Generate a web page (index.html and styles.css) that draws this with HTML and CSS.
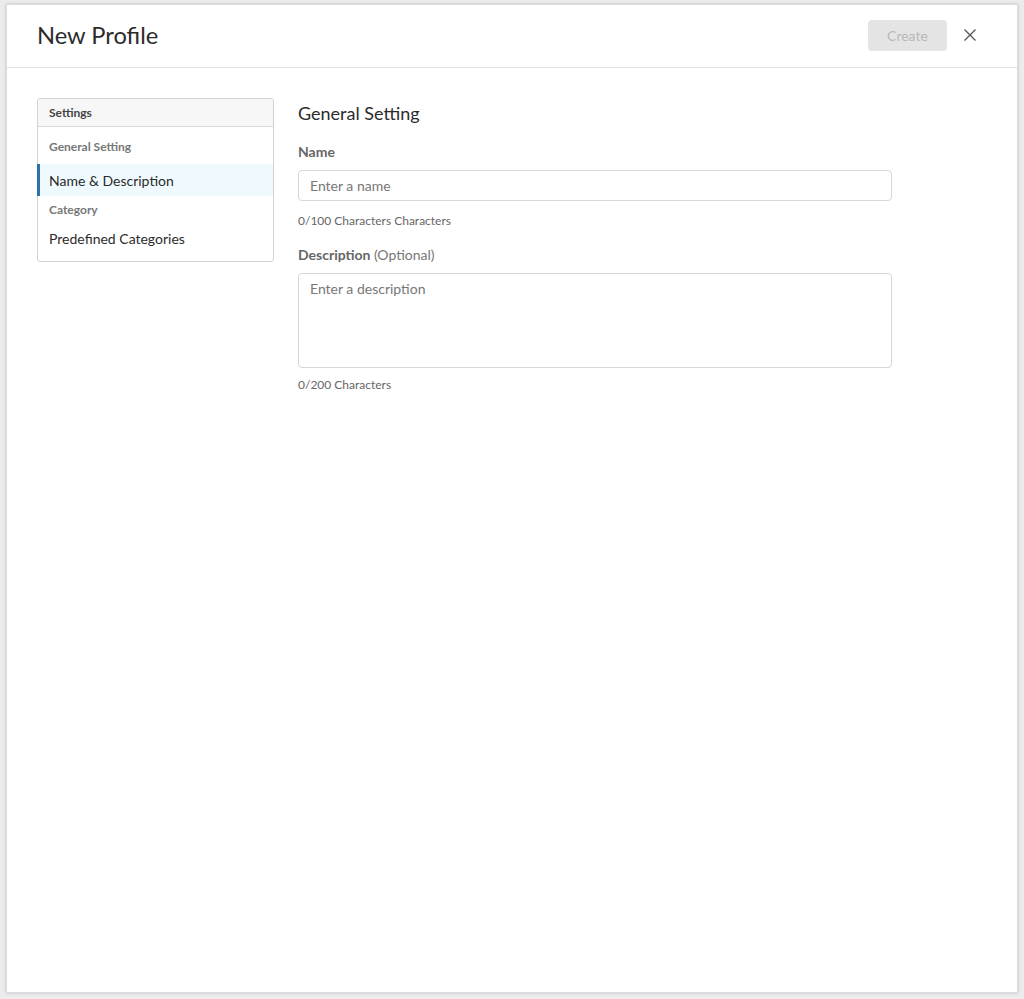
FILE: index.html
```html
<!DOCTYPE html>
<html lang="en">
<head>
<meta charset="utf-8">
<title>New Profile</title>
<link rel="stylesheet" href="styles.css">
</head>
<body>
<div class="modal">
  <header class="modal-header">
    <h1 class="title">New Profile</h1>
    <div class="actions">
      <button class="btn-create" disabled>Create</button>
      <button class="btn-close" aria-label="Close">
        <svg width="12" height="12" viewBox="0 0 12 12"><path d="M0.5 0.5 L11.5 11.5 M11.5 0.5 L0.5 11.5" stroke="#555" stroke-width="1.3" fill="none"/></svg>
      </button>
    </div>
  </header>
  <div class="modal-body">
    <nav class="sidebar">
      <div class="sidebar-head">Settings</div>
      <div class="group-label">General Setting</div>
      <div class="nav-item active">Name &amp; Description</div>
      <div class="group-label group-label-2">Category</div>
      <div class="nav-item">Predefined Categories</div>
    </nav>
    <main class="content">
      <h2 class="section-title">General Setting</h2>
      <label class="field-label">Name</label>
      <div class="input">Enter a name</div>
      <div class="hint">0/100 Characters Characters</div>
      <label class="field-label field-label-2">Description <span class="optional">(Optional)</span></label>
      <div class="textarea">Enter a description</div>
      <div class="hint hint-2">0/200 Characters</div>
    </main>
  </div>
</div>
</body>
</html>
```
FILE: styles.css
```css
* { box-sizing: border-box; }
html, body { margin: 0; padding: 0; }
body {
  background: #ececec;
  font-family: Lato, "Open Sans", Arial, sans-serif;
  color: #333;
  padding: 4px 6px 6px 6px;
}
.modal {
  background: #fff;
  width: 1012px;
  height: 989px;
  box-shadow: 0 0 3px rgba(0,0,0,0.18);
  border: 1px solid #dcdcdc;
}
.modal-header {
  height: 63px;
  border-bottom: 1px solid #e1e1e1;
  display: flex;
  align-items: center;
  justify-content: space-between;
  padding: 0 41px 2px 30px;
}
.title {
  margin: 0;
  font-size: 23.7px;
  font-weight: 400;
  color: #2b2b2b;
}
.actions { display: flex; align-items: center; gap: 17px; }
.btn-create {
  width: 79px;
  height: 31px;
  border: none;
  border-radius: 4px;
  background: #e4e4e4;
  color: #b8b8b8;
  font-family: Lato, Arial, sans-serif;
  font-size: 14px;
  padding: 0;
}
.btn-close {
  background: none;
  border: none;
  padding: 0;
  width: 12px;
  height: 12px;
  display: flex;
}
.modal-body {
  display: flex;
  align-items: flex-start;
  padding: 30px 30px 0 30px;
  gap: 24px;
}
.sidebar {
  width: 237px;
  border: 1px solid #d3d3d3;
  border-radius: 3px;
  padding-bottom: 7px;
}
.sidebar-head {
  height: 28px;
  background: #f7f7f7;
  border-bottom: 1px solid #d9d9d9;
  border-radius: 3px 3px 0 0;
  font-size: 12px;
  font-weight: 700;
  color: #444;
  padding: 0 11px;
  display: flex;
  align-items: center;
}
.group-label {
  font-size: 12px;
  font-weight: 700;
  color: #777;
  padding: 12px 11px 9px;
  line-height: 16px;
}
.group-label-2 { padding-top: 6px; padding-bottom: 4px; }
.nav-item {
  font-size: 14px;
  color: #2b2b2b;
  height: 32px;
  display: flex;
  align-items: center;
  border-left: 3px solid transparent;
  margin-left: -1px;
  padding-left: 9px;
}
.nav-item.active {
  background: #eefafd;
  border-left-color: #2f72a9;
}
.content { width: 594px; }
.section-title {
  margin: 4px 0 0;
  font-size: 18px;
  font-weight: 400;
  color: #2b2b2b;
  line-height: 22px;
}
.field-label {
  display: block;
  margin-top: 19px;
  font-size: 14px;
  font-weight: 700;
  color: #666;
  line-height: 18px;
}
.field-label-2 { margin-top: 18px; }
.optional { font-weight: 400; color: #777; }
.input, .textarea {
  margin-top: 9px;
  border: 1px solid #d6d6d6;
  border-radius: 4px;
  font-size: 14px;
  color: #777;
  padding: 0 11px;
}
.input { height: 31px; line-height: 29px; }
.textarea { height: 95px; padding-top: 6px; line-height: 18px; }
.hint {
  margin-top: 13px;
  font-size: 12px;
  color: #666;
  line-height: 14px;
}
.hint-2 { margin-top: 10px; }
```
